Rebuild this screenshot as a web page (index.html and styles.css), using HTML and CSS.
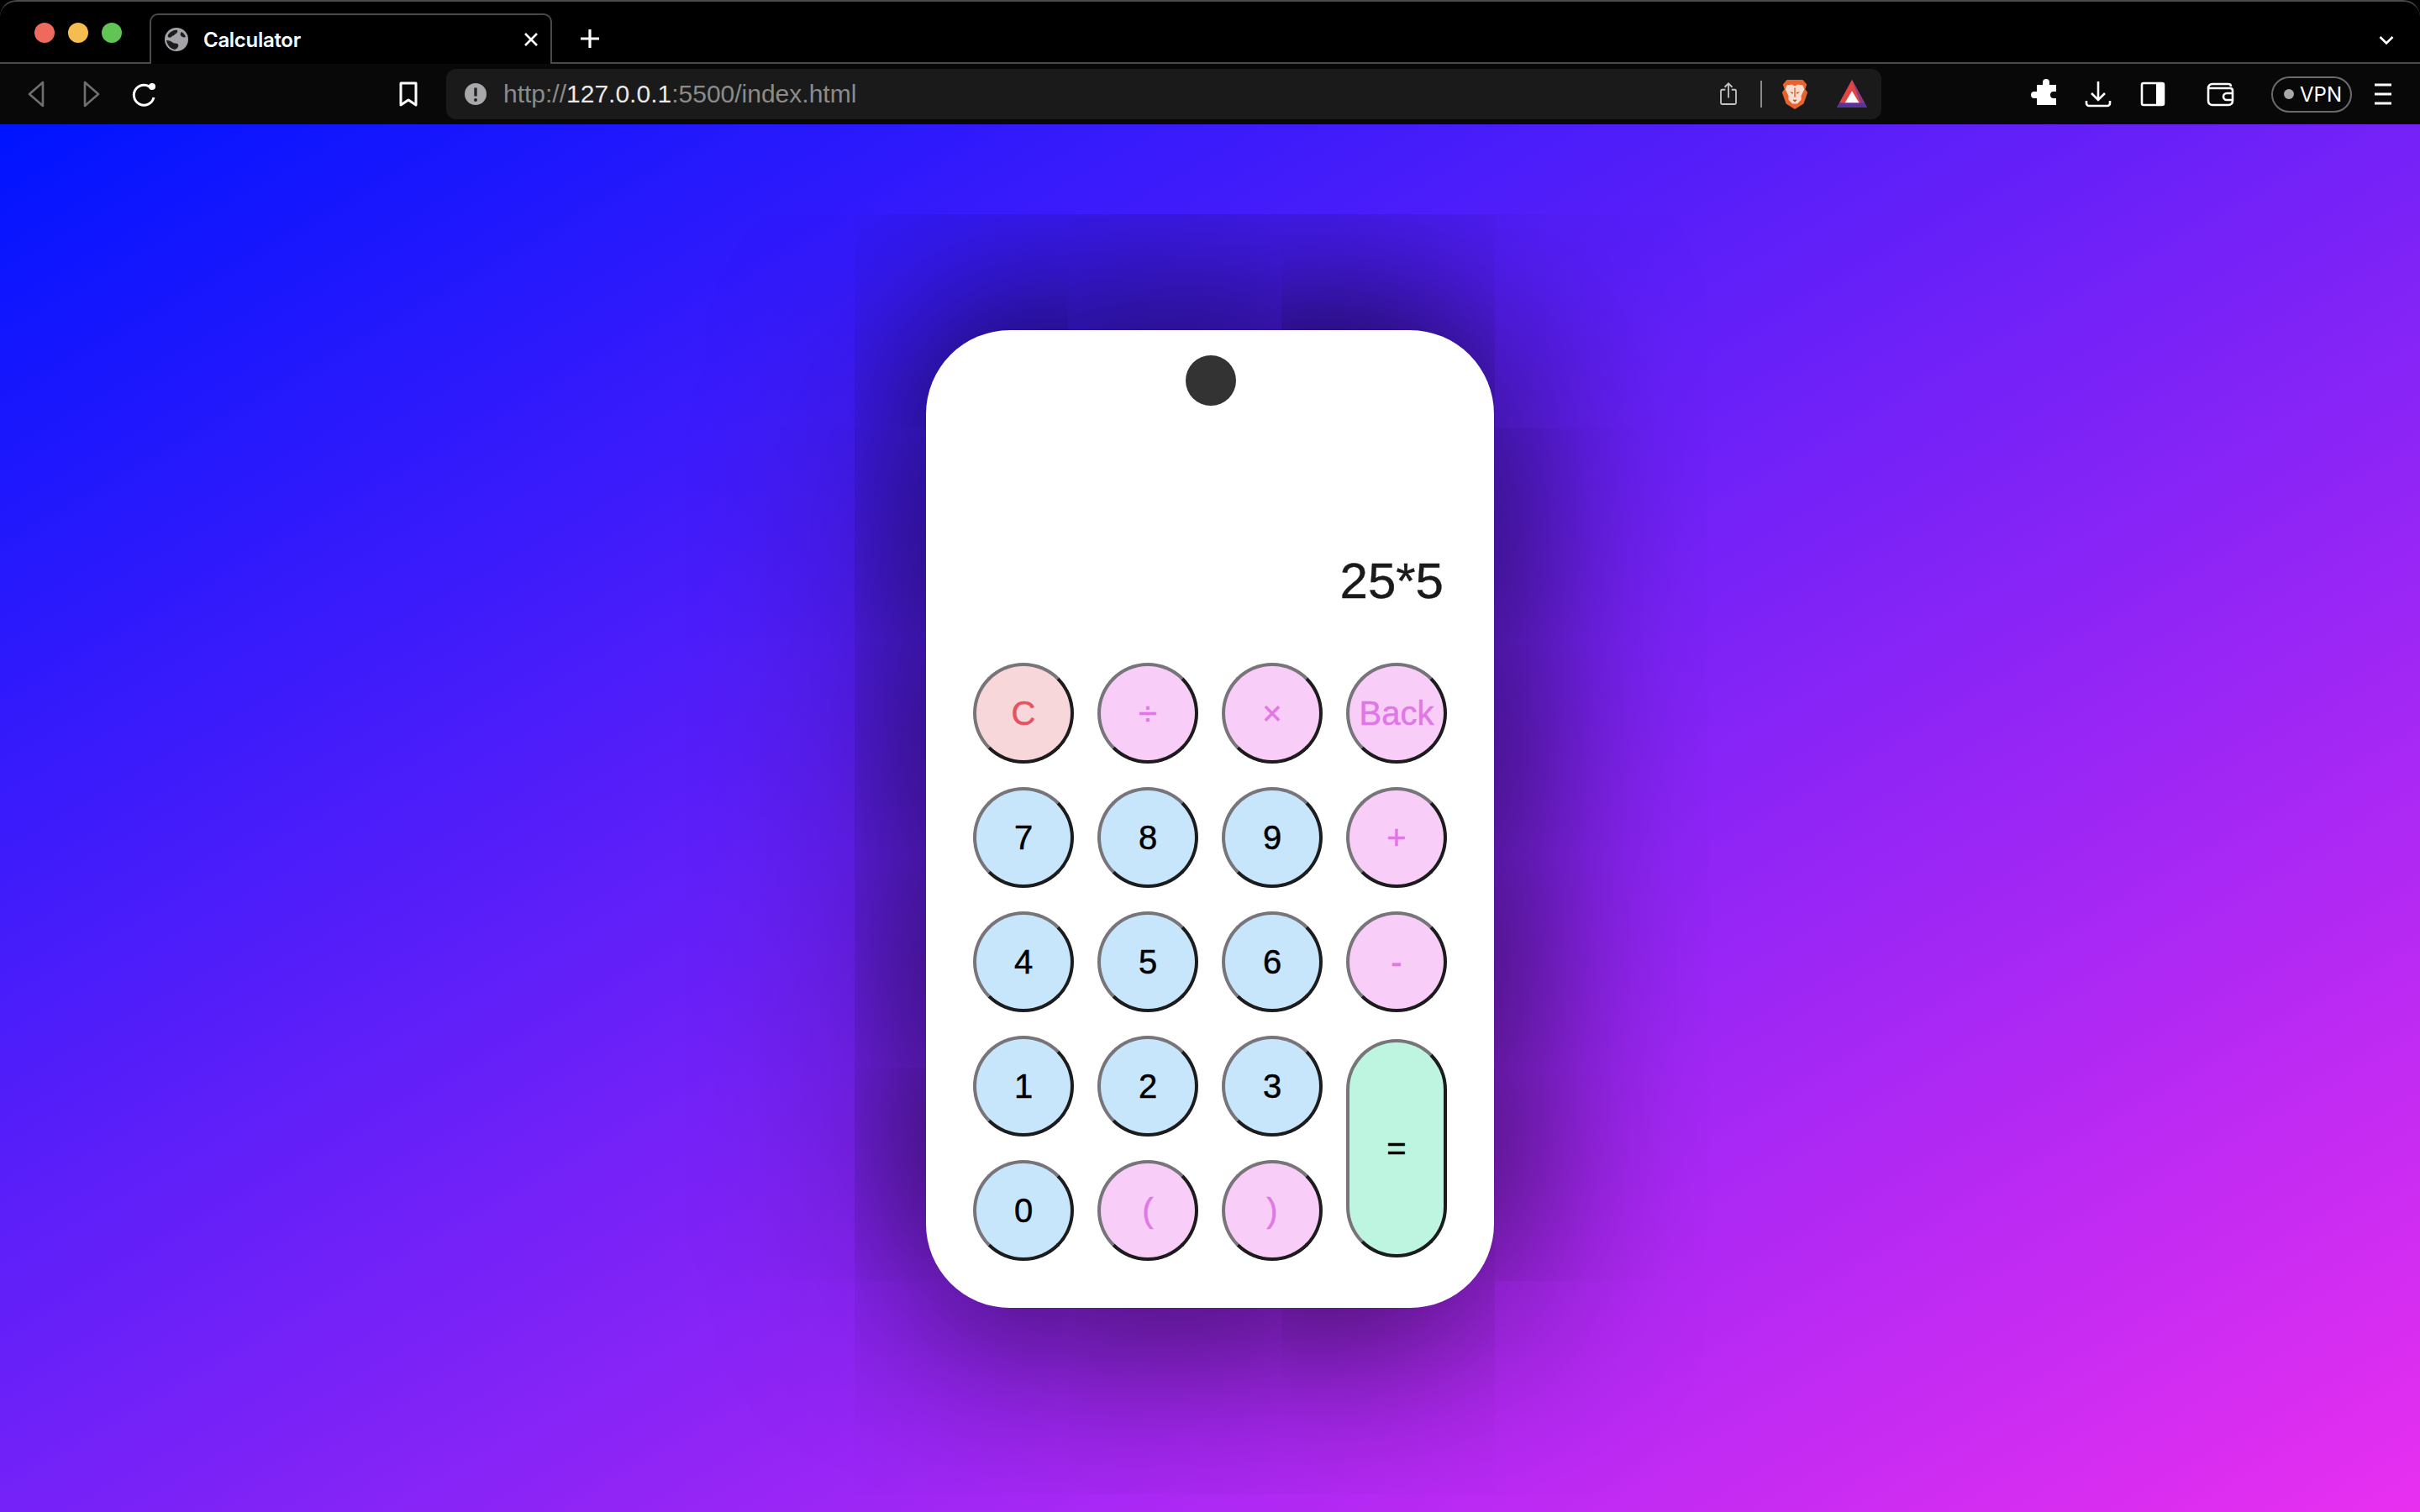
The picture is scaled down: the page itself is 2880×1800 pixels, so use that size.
FILE: index.html
```html
<!DOCTYPE html>
<html lang="en">
<head>
<meta charset="utf-8">
<title>Calculator</title>
<link rel="stylesheet" href="styles.css">
</head>
<body>
<div class="window">
  <header class="tabstrip">
    <div class="lights"><span class="light red"></span><span class="light yellow"></span><span class="light green"></span></div>
    <div class="tab">
      <svg class="globe" viewBox="0 0 28 28"><circle cx="14" cy="14" r="14" fill="#a3a3a8"/><path d="M5 7c3-3 7-5 10-4 1 2-1 4-3 5-1 2-3 1-4 3-1 1-3 1-4 0-1-1 0-3 1-4zM2 15c3 0 6 1 8 3 2 1 5 0 6 2 1 2-1 5-4 6-5-1-9-5-10-11zM20 5c2 1 4 3 5 6-2 1-5 0-6-2-1-1 0-3 1-4z" fill="#1c1c1e"/></svg>
      <span class="tab-title">Calculator</span>
      <svg class="tab-close" viewBox="0 0 18 18"><path d="M2 2l14 14M16 2L2 16" stroke="#fff" stroke-width="2.6" fill="none"/></svg>
    </div>
    <svg class="new-tab" viewBox="0 0 24 24"><path d="M12 1v22M1 12h22" stroke="#fff" stroke-width="3.2" fill="none"/></svg>
    <svg class="tab-menu" viewBox="0 0 18 12"><path d="M1.5 2L9 9.5 16.500 2" stroke="#fff" stroke-width="2.6" fill="none"/></svg>
  </header>
  <nav class="toolbar">
    <div class="nav-group">
      <svg class="slot" viewBox="0 0 40 40"><path d="M27 6v28L11 20z" stroke="#6f6f6f" stroke-width="2.600" fill="none" stroke-linejoin="round"/></svg>
      <svg class="slot" viewBox="0 0 40 40"><path d="M13 6v28l16-14z" stroke="#6f6f6f" stroke-width="2.600" fill="none" stroke-linejoin="round"/></svg>
      <svg class="slot" viewBox="0 0 40 40"><path d="M29 14a12 12 0 1 0 2 10" stroke="#fff" stroke-width="3" fill="none"/><circle cx="29" cy="11" r="4" fill="#fff"/></svg>
    </div>
    <svg class="slot bookmark" viewBox="0 0 40 40"><path d="M11 7h18v26l-9-6-9 6z" stroke="#fff" stroke-width="3" fill="none" stroke-linejoin="round"/></svg>
    <div class="address">
      <svg class="info" viewBox="0 0 26 26"><circle cx="13" cy="13" r="13" fill="#a8a8ac"/><path d="M13 5.500v10" stroke="#222" stroke-width="3.400"/><circle cx="13" cy="20" r="2" fill="#222"/></svg>
      <span class="url">http://<b class="host">127.0.0.1</b>:5500/index.html</span>
      <svg class="share" viewBox="0 0 26 40"><path d="M8 13H3a2 2 0 0 0-2 2v19a2 2 0 0 0 2 2h20a2 2 0 0 0 2-2V15a2 2 0 0 0-2-2h-5M13 26V3M7 9l6-6 6 6" stroke="#c4c4c4" stroke-width="2.400" fill="none"/></svg>
      <span class="sep"></span>
      <svg class="lion" viewBox="0 0 34 40"><path d="M7 2h20l5 6-2 6 3 4-5 14-11 7-11-7L1 18l3-4-2-6z" fill="#e8632c"/><path d="M7 9l6-1 4 2 4-2 6 1 2 5-4 8v5l-5 5h-6l-5-5v-5l-4-8z" fill="#f6ddd0"/><path d="M11 17l4 1-1 2zM23 17l-4 1 1 2zM14 27h6l-3 3z" fill="#c4481c"/><path d="M17 12v12" stroke="#e8632c" stroke-width="1.500"/></svg>
      <svg class="bat" viewBox="0 0 38 36"><path d="M19 0L0 35h38z" fill="#7b3c9c"/><path d="M19 0L3 29.500h32z" fill="#e2453f"/><path d="M19 0l16 29.500 3 5.500L30 30z" fill="#8a3a8e"/><path d="M19 14L10 29h18z" fill="#fff"/><path d="M0 35l3-6h32l3 6z" fill="#56349c"/></svg>
    </div>
    <div class="actions">
      <svg class="slot" viewBox="0 0 40 40"><path d="M16 7a4 4 0 0 1 8 0v3h8v8h-3a4 4 0 0 0 0 8h3v8H9v-8H6a4 4 0 0 1 0-8h3v-8h7z" fill="#fff" transform="translate(1 -1)"/></svg>
      <svg class="slot" viewBox="0 0 40 40"><path d="M20 5v22M12 19l8 8 8-8M6 28v3a3 3 0 0 0 3 3h22a3 3 0 0 0 3-3v-3" stroke="#fff" stroke-width="2.600" fill="none"/></svg>
      <svg class="slot" viewBox="0 0 40 40"><rect x="7" y="7" width="26" height="26" rx="2" stroke="#fff" stroke-width="2.600" fill="none"/><rect x="24" y="7" width="9" height="26" fill="#fff"/></svg>
      <svg class="slot" viewBox="0 0 40 40"><path d="M6 13c0-3 2-5 5-5h19c2 0 3 1 3 3M6 13v15c0 3 2 5 5 5h19c3 0 5-2 5-5V16c0-2-1-3-3-3H6z" stroke="#fff" stroke-width="2.600" fill="none"/><path d="M35 19h-7a4 4 0 0 0 0 8h7" stroke="#fff" stroke-width="2.600" fill="none"/></svg>
      <div class="vpn"><span class="vpn-dot"></span><span>VPN</span></div>
      <svg class="slot menu" viewBox="0 0 40 40"><path d="M10 9h20M10 20h20M10 31h20" stroke="#fff" stroke-width="3" fill="none"/></svg>
    </div>
  </nav>
  <main class="stage">
    <section class="phone">
      <div class="camera"></div>
      <div class="display">25*5</div>
      <div class="keys">
        <button class="key clear">C</button>
        <button class="key op">÷</button>
        <button class="key op">×</button>
        <button class="key op">Back</button>
        <button class="key num">7</button>
        <button class="key num">8</button>
        <button class="key num">9</button>
        <button class="key op">+</button>
        <button class="key num">4</button>
        <button class="key num">5</button>
        <button class="key num">6</button>
        <button class="key op">-</button>
        <button class="key num">1</button>
        <button class="key num">2</button>
        <button class="key num">3</button>
        <button class="key equals">=</button>
        <button class="key num">0</button>
        <button class="key op">(</button>
        <button class="key op">)</button>
      </div>
    </section>
  </main>
</div>
</body>
</html>
```
FILE: styles.css
```css
* { box-sizing: border-box; }
html, body { margin: 0; height: 100%; background: #000; }
.window { height: 1800px; display: flex; flex-direction: column; font-family: "Liberation Sans", Arial, sans-serif; }

.tabstrip {
  height: 76px; flex: none; display: flex; align-items: flex-end;
  background: #000; border-top: 2px solid #4a4a4a; border-bottom: 2px solid #4a4a4a;
  border-radius: 20px 20px 0 0; padding-left: 41px; position: relative;
}
.lights { display: flex; gap: 16px; align-self: flex-start; margin-top: 25px; }
.light { width: 24px; height: 24px; border-radius: 50%; }
.red { background: #ee6a5f; }
.yellow { background: #f5bd4f; }
.green { background: #61c454; }
.tab {
  width: 479px; height: 60px; margin-left: 33px; margin-bottom: -2px;
  display: flex; align-items: center; padding-left: 16px; padding-right: 14px;
  background: #000; border: 2px solid #4a4a4a; border-bottom: 0; border-radius: 10px 10px 0 0;
}
.globe { width: 28px; height: 28px; }
.tab-title { margin-left: 18px; color: #fff; font: 600 24px Inter, sans-serif; letter-spacing: -0.3px; }
.tab-close { width: 18px; height: 18px; margin-left: auto; }
.new-tab { width: 24px; height: 24px; margin-left: 33px; align-self: flex-start; margin-top: 32px; }
.tab-menu { width: 18px; height: 12px; position: absolute; right: 31px; top: 40px; }

.toolbar { height: 72px; flex: none; display: flex; align-items: center; background: #080808; padding-left: 24px; }
.slot { width: 40px; height: 40px; flex: none; }
.nav-group { display: flex; gap: 24px; }
.bookmark { margin-left: 274px; }
.address {
  width: 1708px; height: 60px; margin-left: 25px; flex: none; display: flex; align-items: center;
  background: #1a1a1a; border-radius: 12px; padding-left: 22px;
}
.info { width: 26px; height: 26px; }
.url { margin-left: 20px; font: 400 30px "Liberation Sans", Arial, sans-serif; color: #8b8b8b; }
.host { font-weight: 400; color: #e8e8e8; }
.share { width: 26px; height: 30px; margin-left: 1025px; }
.sep { width: 2px; height: 32px; background: #8a8a8a; margin-left: 25px; }
.lion { width: 34px; height: 38px; margin-left: 22px; }
.bat { width: 38px; height: 34px; margin-left: 32px; }
.actions { display: flex; align-items: center; margin-left: 175px; }
.actions > :nth-child(2) { margin-left: 23px; }
.actions > :nth-child(3) { margin-left: 25px; }
.actions > :nth-child(4) { margin-left: 40px; }
.vpn {
  width: 96px; height: 43px; margin-left: 41px; display: flex; align-items: center; padding-left: 13px; gap: 7px;
  border: 2px solid #6a6a6a; border-radius: 22px; color: #fff; font: 400 24px Inter, sans-serif;
}
.vpn-dot { width: 12px; height: 12px; border-radius: 50%; background: #a8a8a8; flex: none; }
.menu { margin-left: 17px; }

.stage {
  flex: 1; display: flex; align-items: center; justify-content: center; padding-top: 2px;
  background: linear-gradient(to bottom right, #0014ff, #e82ff0);
}
.phone {
  width: 676px; height: 1164px; display: flex; flex-direction: column;
  padding: 30px 56px 56px; background: #fff; border-radius: 100px;
  box-shadow: 0 0 230px 10px rgba(0, 0, 0, 0.95);
}
.camera { width: 60px; height: 60px; border-radius: 50%; background: #333; align-self: center; flex: none; margin-left: 2px; }
.display {
  flex: 1; display: flex; align-items: flex-end; justify-content: flex-end;
  padding: 0 4px 63px 0; font-size: 60px; line-height: 69px; color: #1a1a1a; -webkit-text-stroke: 0.4px #1a1a1a;
}
.keys { display: grid; grid-template-columns: repeat(4, 120px); grid-auto-rows: 120px; gap: 28px; }
.key {
  width: 120px; height: 120px; padding: 0; border-radius: 60px; border: 4px solid;
  border-color: #77747a #1c1c1c #1c1c1c #77747a;
  font: 400 40px "Liberation Sans", Arial, sans-serif; text-align: center;
  -webkit-text-stroke: 0.5px currentColor;
}
.num { background: #c8e6fb; color: #000; }
.op { background: #f8cdf8; color: #df78e5; }
.clear { background: #f8d7da; color: #e5535f; }
.equals {
  grid-column: 4; grid-row: 4 / span 2; align-self: center; height: 260px;
  background: #bdf5e0; color: #000;
}
```
